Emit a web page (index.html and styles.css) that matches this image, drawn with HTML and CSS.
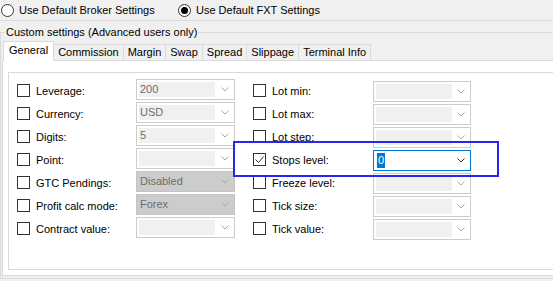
FILE: index.html
```html
<!DOCTYPE html>
<html>
<head>
<meta charset="utf-8">
<link rel="stylesheet" href="styles.css">
</head>
<body>
<div class="win">
  <div class="radios">
    <label class="radio first"><span class="rb"></span>Use Default Broker Settings</label>
    <label class="radio"><span class="rb on"></span>Use Default FXT Settings</label>
  </div>
  <fieldset class="group">
    <legend>Custom settings (Advanced users only)</legend>
    <div class="tabs">
      <div class="tab active">General</div>
      <div class="tab">Commission</div>
      <div class="tab">Margin</div>
      <div class="tab">Swap</div>
      <div class="tab">Spread</div>
      <div class="tab">Slippage</div>
      <div class="tab">Terminal Info</div>
    </div>
    <div class="pane">
      <div class="box">
        <div class="col">
          <div class="row"><span class="cb"></span><span class="lbl">Leverage:</span><div class="combo"><span class="field">200</span><svg class="arrow" width="8" height="5" viewBox="0 0 8 5"><polyline points="0.5,0.5 4,4 7.5,0.5"/></svg></div></div>
          <div class="row"><span class="cb"></span><span class="lbl">Currency:</span><div class="combo"><span class="field">USD</span><svg class="arrow" width="8" height="5" viewBox="0 0 8 5"><polyline points="0.5,0.5 4,4 7.5,0.5"/></svg></div></div>
          <div class="row"><span class="cb"></span><span class="lbl">Digits:</span><div class="combo"><span class="field">5</span><svg class="arrow" width="8" height="5" viewBox="0 0 8 5"><polyline points="0.5,0.5 4,4 7.5,0.5"/></svg></div></div>
          <div class="row"><span class="cb"></span><span class="lbl">Point:</span><div class="combo"><span class="field"></span><svg class="arrow" width="8" height="5" viewBox="0 0 8 5"><polyline points="0.5,0.5 4,4 7.5,0.5"/></svg></div></div>
          <div class="row"><span class="cb"></span><span class="lbl">GTC Pendings:</span><div class="combo off"><span class="field">Disabled</span><svg class="arrow" width="8" height="5" viewBox="0 0 8 5"><polyline points="0.5,0.5 4,4 7.5,0.5"/></svg></div></div>
          <div class="row"><span class="cb"></span><span class="lbl">Profit calc mode:</span><div class="combo off"><span class="field">Forex</span><svg class="arrow" width="8" height="5" viewBox="0 0 8 5"><polyline points="0.5,0.5 4,4 7.5,0.5"/></svg></div></div>
          <div class="row"><span class="cb"></span><span class="lbl">Contract value:</span><div class="combo"><span class="field"></span><svg class="arrow" width="8" height="5" viewBox="0 0 8 5"><polyline points="0.5,0.5 4,4 7.5,0.5"/></svg></div></div>
        </div>
        <div class="col right">
          <div class="row"><span class="cb"></span><span class="lbl">Lot min:</span><div class="combo"><span class="field"></span><svg class="arrow" width="8" height="5" viewBox="0 0 8 5"><polyline points="0.5,0.5 4,4 7.5,0.5"/></svg></div></div>
          <div class="row"><span class="cb"></span><span class="lbl">Lot max:</span><div class="combo"><span class="field"></span><svg class="arrow" width="8" height="5" viewBox="0 0 8 5"><polyline points="0.5,0.5 4,4 7.5,0.5"/></svg></div></div>
          <div class="row"><span class="cb"></span><span class="lbl">Lot step:</span><div class="combo"><span class="field"></span><svg class="arrow" width="8" height="5" viewBox="0 0 8 5"><polyline points="0.5,0.5 4,4 7.5,0.5"/></svg></div></div>
          <div class="row"><span class="cb checked"><svg width="11" height="11" viewBox="0 0 11 11"><polyline points="1.5,5.5 4.5,8.5 9.5,2.5"/></svg></span><span class="lbl">Stops level:</span><div class="combo focus"><span class="field"><span class="sel">0</span></span><svg class="arrow" width="8" height="5" viewBox="0 0 8 5"><polyline points="0.5,0.5 4,4 7.5,0.5"/></svg></div></div>
          <div class="row"><span class="cb"></span><span class="lbl">Freeze level:</span><div class="combo"><span class="field"></span><svg class="arrow" width="8" height="5" viewBox="0 0 8 5"><polyline points="0.5,0.5 4,4 7.5,0.5"/></svg></div></div>
          <div class="row"><span class="cb"></span><span class="lbl">Tick size:</span><div class="combo"><span class="field"></span><svg class="arrow" width="8" height="5" viewBox="0 0 8 5"><polyline points="0.5,0.5 4,4 7.5,0.5"/></svg></div></div>
          <div class="row"><span class="cb"></span><span class="lbl">Tick value:</span><div class="combo"><span class="field"></span><svg class="arrow" width="8" height="5" viewBox="0 0 8 5"><polyline points="0.5,0.5 4,4 7.5,0.5"/></svg></div></div>
        </div>
      </div>
    </div>
  </fieldset>
  <div class="highlight"></div>
</div>
</body>
</html>
```
FILE: styles.css
```css
html, body {
  margin: 0;
  height: 100%;
  overflow: hidden;
}
body {
  background: #f0f0f0;
  font: 11px "Liberation Sans", Arial, sans-serif;
  color: #000;
}
.win {
  position: relative;
  width: 640px;
}
.radios {
  display: flex;
  align-items: center;
  height: 20px;
  padding-left: 1px;
  border-bottom: 1px solid #dadada;
}
.radio {
  display: flex;
  align-items: center;
  gap: 5px;
}
.radio.first {
  flex: 0 0 177px;
}
.rb {
  width: 11px;
  height: 11px;
  border: 1px solid #333;
  border-radius: 50%;
  background: #fff;
  display: flex;
  align-items: center;
  justify-content: center;
}
.rb.on::after {
  content: "";
  width: 7px;
  height: 7px;
  border-radius: 50%;
  background: #000;
}
.group {
  margin: 4px 0 0;
  padding: 0 0 2px 1px;
  border: 1px solid #dadada;
  width: 620px;
  min-width: 0;
  box-sizing: border-box;
}
.group legend {
  margin-left: 3px;
  padding: 0 1px;
  line-height: 14px;
}
.tabs {
  display: flex;
  align-items: flex-end;
  height: 19px;
  margin-top: 2px;
  padding-left: 1px;
}
.tab {
  height: 15px;
  line-height: 15px;
  border: 1px solid #dadada;
  border-bottom: none;
  padding: 0 4px;
  margin-left: -1px;
  background: #f0f0f0;
}
.tab.active {
  position: relative;
  z-index: 1;
  height: 19px;
  line-height: 17px;
  margin-left: 0;
  margin-bottom: -1px;
  background: #fff;
  padding: 0 5px;
}
.pane {
  background: #fff;
  border: 1px solid #dadada;
  height: 214px;
}
.box {
  margin: 11px 0 0 5px;
  height: 198px;
  box-sizing: border-box;
  border: 1px solid #dadada;
  padding: 6px 0 0 8px;
  display: grid;
  grid-template-columns: 218px 218px;
  column-gap: 18px;
  align-content: start;
}
.col {
  display: flex;
  flex-direction: column;
}
.row {
  display: flex;
  align-items: center;
  height: 23px;
}
.cb {
  flex: none;
  width: 11px;
  height: 11px;
  border: 1px solid #333;
  background: #fff;
  margin-right: 6px;
  display: flex;
}
.cb svg polyline {
  fill: none;
  stroke: #333;
  stroke-width: 1;
}
.lbl {
  flex: 0 0 100px;
  white-space: nowrap;
}
.right .lbl {
  flex-basis: 101px;
}
.combo {
  flex: none;
  align-self: flex-start;
  width: 99px;
  height: 21px;
  box-sizing: border-box;
  border: 1px solid #cccccc;
  background: #fff;
  padding: 2px;
  display: flex;
  align-items: center;
}
.right .combo {
  width: 98px;
  align-self: flex-end;
}
.field {
  width: 75px;
  height: 15px;
  line-height: 15px;
  padding-left: 1px;
  background: #f0f0f0;
  color: #6d6d6d;
}
.arrow {
  margin-left: auto;
  margin-right: 3px;
}
.arrow polyline {
  fill: none;
  stroke: #a8a8a8;
  stroke-width: 1;
}
.combo.off {
  background: #cccccc;
  border-color: #c4c4c4;
}
.combo.off .field {
  background: transparent;
  color: #6d6d6d;
}
.combo.focus {
  border-color: #0078d7;
}
.combo.focus .field {
  background: #fff;
  color: #000;
}
.combo.focus .arrow polyline {
  stroke: #333;
}
.sel {
  display: inline-block;
  background: #0078d7;
  color: #fff;
  padding: 0 1px;
  line-height: 15px;
}
.highlight {
  position: absolute;
  left: 233px;
  top: 141px;
  width: 266px;
  height: 36px;
  box-sizing: border-box;
  border: 2px solid #2626f2;
}
```
